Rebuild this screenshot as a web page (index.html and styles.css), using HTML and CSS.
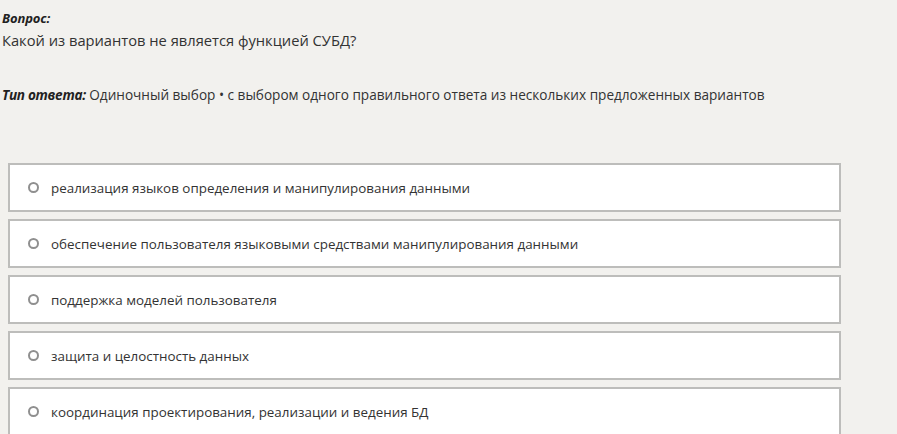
FILE: index.html
```html
<!DOCTYPE html>
<html lang="ru">
<head>
<meta charset="utf-8">
<link rel="stylesheet" href="styles.css">
</head>
<body>
<div class="page">
  <div class="label">Вопрос:</div>
  <div class="question">Какой из вариантов не является функцией СУБД?</div>
  <div class="type"><span class="type-label">Тип ответа:</span> Одиночный выбор • с выбором одного правильного ответа из нескольких предложенных вариантов</div>
  <div class="options">
    <div class="option"><span class="radio"></span><span class="opt-text">реализация языков определения и манипулирования данными</span></div>
    <div class="option"><span class="radio"></span><span class="opt-text">обеспечение пользователя языковыми средствами манипулирования данными</span></div>
    <div class="option"><span class="radio"></span><span class="opt-text">поддержка моделей пользователя</span></div>
    <div class="option"><span class="radio"></span><span class="opt-text">защита и целостность данных</span></div>
    <div class="option"><span class="radio"></span><span class="opt-text">координация проектирования, реализации и ведения БД</span></div>
  </div>
</div>
</body>
</html>
```

FILE: styles.css
```css
html, body {
  margin: 0;
  padding: 0;
  background: #f2f1ee;
  overflow: hidden;
}
.page {
  font-family: "Open Sans", "Noto Sans", sans-serif;
  color: #333;
  padding: 10px 0 0 2px;
  display: flex;
  flex-direction: column;
}
.label {
  font-size: 13px;
  font-weight: 700;
  font-style: italic;
  color: #222;
  line-height: 16px;
  letter-spacing: -0.1px;
}
.question {
  font-size: 14.7px;
  line-height: 20px;
  margin-top: 4px;
  color: #333;
}
.type {
  margin-top: 36px;
  font-size: 13.6px;
  line-height: 18px;
  color: #333;
}
.type-label {
  font-weight: 700;
  font-style: italic;
  color: #222;
  letter-spacing: -0.3px;
}
.options {
  margin-top: 59px;
  margin-left: 6px;
  width: 833px;
  display: flex;
  flex-direction: column;
  gap: 7px;
}
.option {
  height: 45px;
  background: #fff;
  border: 2px solid #bdbdbb;
  display: flex;
  align-items: center;
  padding-left: 18px;
}
.radio {
  box-sizing: border-box;
  width: 11px;
  height: 11px;
  border: 2px solid #8f8f8f;
  border-radius: 50%;
  flex: none;
}
.opt-text {
  margin-left: 12px;
  font-size: 13.4px;
  color: #333;
}
```
